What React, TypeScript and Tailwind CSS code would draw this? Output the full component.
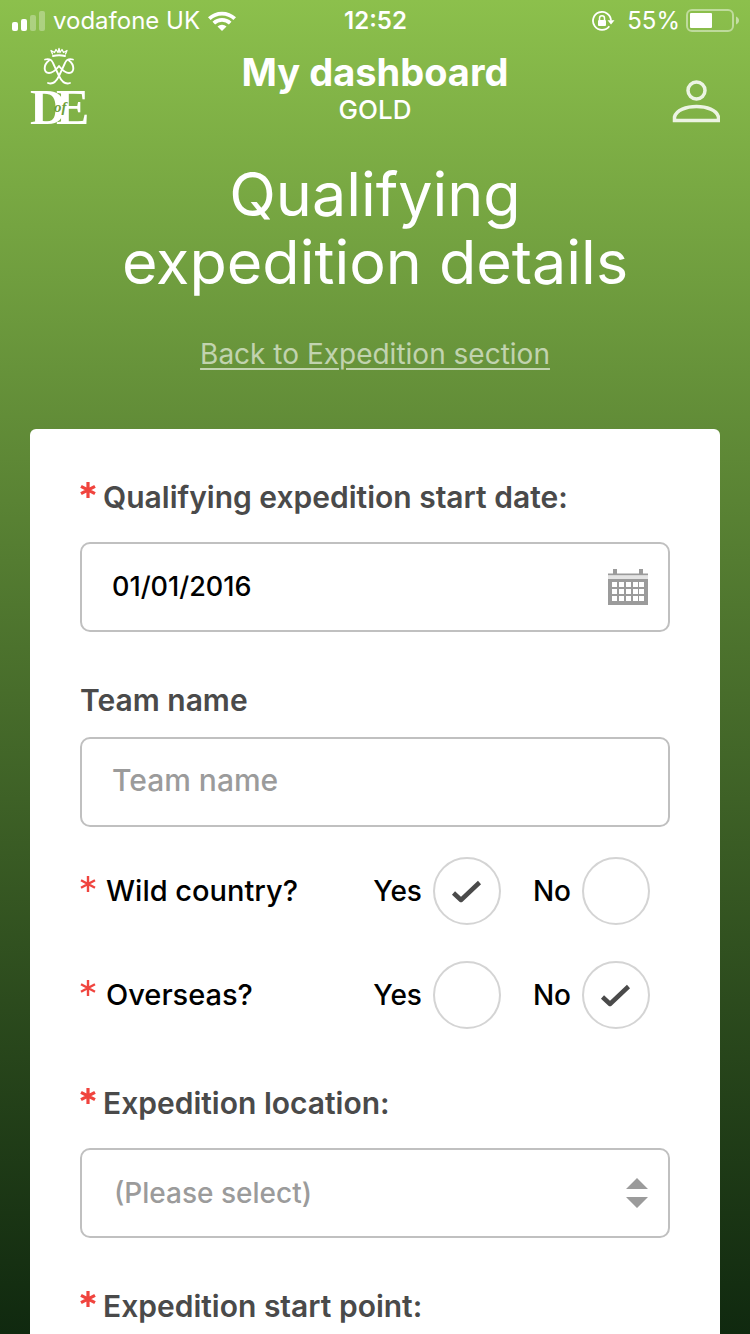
import React, { useState } from 'react';

const LOCATIONS = ['Brecon Beacons', 'Dartmoor', 'Lake District', 'Peak District', 'Snowdonia'];

const StatusBar: React.FC = () => (
  <div className="grid h-10 grid-cols-[1fr_auto_1fr] items-center pr-[11px] pl-3 text-2xl leading-10">
    <div className="flex items-center">
      <svg className="mr-2 h-5 w-[33px]" viewBox="0 0 33 20" fill="currentColor">
        <rect x="0" y="11" width="6" height="9" rx="2" />
        <rect x="9" y="8" width="6" height="12" rx="2" />
        <rect x="18" y="4" width="6" height="16" rx="2" opacity="0.3" />
        <rect x="27" y="0" width="6" height="20" rx="2" opacity="0.3" />
      </svg>
      <span className="pt-px whitespace-nowrap">vodafone UK</span>
      <svg className="ml-2 h-5 w-7" viewBox="0 0 28 20">
        <path d="M1.300 7.600a18.500 18.500 0 0 1 25.400 0M5.800 12.200a12 12 0 0 1 16.400 0" fill="none" stroke="currentColor" strokeWidth="3.800" />
        <path d="M14 20l-4.500-4.500a6.500 6.500 0 0 1 9 0Z" fill="currentColor" />
      </svg>
    </div>

    <span className="pt-px font-semibold">12:52</span>

    <div className="flex items-center justify-end">
      <svg className="mr-3 h-5 w-[23px]" viewBox="0 0 23 20">
        <path d="M17.300 15.200A9 9 0 1 1 19 9.500" fill="none" stroke="currentColor" strokeWidth="1.800" />
        <path d="M15.500 9.200h7l-3.500 4.300Z" fill="currentColor" />
        <rect x="6" y="9" width="8" height="6" rx="1" fill="currentColor" />
        <path d="M7.500 9V7.200a2.500 2.500 0 0 1 5 0V9" fill="none" stroke="currentColor" strokeWidth="1.500" />
      </svg>
      <span className="pt-px">55%</span>
      <svg className="ml-[6px] h-6 w-[53px]" viewBox="0 0 53 24">
        <rect x="1" y="1" width="46" height="21" rx="5" fill="none" stroke="currentColor" strokeWidth="2" opacity="0.45" />
        <rect x="4" y="4" width="22" height="15" rx="1" fill="currentColor" />
        <path d="M50 7.500c4 1.500 4 6.500 0 8Z" fill="currentColor" opacity="0.5" />
      </svg>
    </div>
  </div>
);

const Logo: React.FC = () => (
  <svg className="h-[78px] w-[60px] overflow-visible" viewBox="0 0 60 78" role="img" aria-label="DofE">
    <g fill="none" stroke="white" strokeLinecap="round" strokeLinejoin="round">
      {/* Crown */}
      <path d="M23 8q6-1.600 12 0" strokeWidth="2" />
      <path d="M22.500 6l-1.500-3.500 3.500 2 1.500-3 2 3 1-4 1 4 2-3 1.500 3 3.500-2-1.500 3.500" strokeWidth="1.300" />
      {/* Crossed cypher */}
      <path d="M15 11.500c4-1 6.500 0 8 3.500l6 13c2.500 5 6 9 11 7" strokeWidth="1.800" />
      <path d="M43 11.500c-4-1-6.500 0-8 3.500l-6 13c-2.500 5-6 9-11 7" strokeWidth="1.800" />
      <path d="M19 12.500c-5.500 4-6 12.500 0 12.500 5 0 7-3.500 10-7 3 3.500 5 7 10 7 6 0 5.500-8.500 0-12.500" strokeWidth="1.900" />
    </g>
    <g fontFamily="'Liberation Serif', serif" fontWeight="700">
      <text x="0" y="76" fontSize="50" fill="white">D</text>
      <text x="26" y="76" fontSize="50" fill="white">E</text>
      <text x="24" y="64" fontSize="15" fontStyle="italic" fill="#6fa03a">of</text>
    </g>
  </svg>
);

const Required: React.FC<{ bold?: boolean }> = ({ bold }) => (
  <svg className="mt-[5px] h-4 w-4 shrink-0 text-[#f0443e]" viewBox="0 0 16 16" role="img" aria-label="required">
    <path d="M8 0v16M1 4.300l14 7.400M15 4.300l-14 7.400" stroke="currentColor" strokeWidth={bold ? 3.2 : 2.4} />
  </svg>
);

interface FieldLabelProps {
  htmlFor: string;
  required?: boolean;
  children: React.ReactNode;
}

const FieldLabel: React.FC<FieldLabelProps> = ({ htmlFor, required, children }) => (
  <label htmlFor={htmlFor} className="flex gap-[7px] text-[30px] leading-10 font-semibold text-[#4a4a4a]">
    {required && <Required bold />}
    {children}
  </label>
);

interface YesNoRowProps {
  name: string;
  label: string;
  value: string;
  onChange: (value: string) => void;
}

const YesNoRow: React.FC<YesNoRowProps> = ({ name, label, value, onChange }) => (
  <div role="radiogroup" aria-labelledby={`${name}-label`} className="flex items-center pr-5 font-medium text-black">
    <span id={`${name}-label`} className="flex flex-1 gap-[10px] text-[29px] leading-10">
      <Required />
      {label}
    </span>
    <div className="flex gap-8 text-[28px] leading-10">
      {['Yes', 'No'].map(option => (
        <label key={option} className="flex items-center gap-[11px]">
          {option}
          <span className="grid place-items-center">
            <input
              type="radio"
              name={name}
              value={option}
              checked={value === option}
              onChange={() => onChange(option)}
              className="col-start-1 row-start-1 size-[68px] appearance-none rounded-full border-2 border-[#d4d4d4] bg-white"
            />
            {value === option && (
              <svg className="pointer-events-none col-start-1 row-start-1 h-6 w-8" viewBox="0 0 32 24">
                <path d="M2.500 14l7.500 7L28.500 3.500" fill="none" stroke="#4a4a4a" strokeWidth="4.500" strokeLinejoin="round" />
              </svg>
            )}
          </span>
        </label>
      ))}
    </div>
  </div>
);

const App: React.FC = () => {
  const [startDate, setStartDate] = useState('01/01/2016');
  const [teamName, setTeamName] = useState('');
  const [wildCountry, setWildCountry] = useState('Yes');
  const [overseas, setOverseas] = useState('No');
  const [location, setLocation] = useState('');

  return (
    <div className="flex min-h-screen flex-col bg-linear-to-b from-[#8cc04c] to-[#10290f] font-['Inter',sans-serif] text-white">
      <StatusBar />

      {/* Header */}
      <header className="grid grid-cols-[60px_1fr_60px] px-[30px] pt-2">
        <Logo />
        <div className="pt-1 text-center">
          <p className="text-[38px] leading-10 font-bold">My dashboard</p>
          <p className="text-[26px] leading-9 font-medium">GOLD</p>
        </div>
        <button type="button" aria-label="Profile" className="flex items-end justify-end pb-1">
          <svg className="h-11 w-12" viewBox="0 0 48 44" fill="none" stroke="white" strokeOpacity="0.850" strokeWidth="3.500">
            <circle cx="24.500" cy="10.500" r="8.500" />
            <path d="M2.500 40.500V37C6 23 43 23 46.500 37V40.500Z" />
          </svg>
        </button>
      </header>

      <div className="mt-8 px-[30px] text-center">
        <h1 className="mx-auto max-w-[600px] text-[61px] leading-[68px]">Qualifying expedition details</h1>
        <a href="#expedition" className="mt-[38px] inline-block text-[28px] leading-10 text-white/60 underline decoration-2 underline-offset-4">
          Back to Expedition section
        </a>
      </div>

      {/* Form card */}
      <form className="mx-[30px] mt-[55px] flex-1 rounded-t-md bg-white px-[50px] pt-12">
        <FieldLabel htmlFor="start-date" required>Qualifying expedition start date:</FieldLabel>
        <div className="mt-[25px] flex h-[90px] items-center rounded-[10px] border-2 border-[#c0c0c0] pr-5 pl-[30px]">
          <input
            id="start-date"
            type="text"
            value={startDate}
            onChange={e => setStartDate(e.target.value)}
            className="min-w-0 flex-1 text-[27px] font-medium text-black outline-none"
          />
          <button type="button" aria-label="Open calendar">
            <svg className="h-9 w-10" viewBox="0 0 40 36">
              <path d="M5 0h4v5H5ZM31 0h4v5h-4ZM0 4.500h40v2H0ZM0 10h40v26H0Z" fill="#9b9b9b" />
              <path d="M0 6.500h40V10H0Z" fill="#e4e4e4" />
              {[13, 20, 27].map(y =>
                [4, 11, 18, 25, 31].map(x => <rect key={`${x}-${y}`} x={x} y={y} width="5" height="5" fill="white" />)
              )}
            </svg>
          </button>
        </div>

        <div className="mt-12">
          <FieldLabel htmlFor="team-name">Team name</FieldLabel>
        </div>
        <input
          id="team-name"
          type="text"
          placeholder="Team name"
          value={teamName}
          onChange={e => setTeamName(e.target.value)}
          className="mt-[17px] block h-[90px] w-full rounded-[10px] border-2 border-[#c0c0c0] px-[30px] pb-1 text-[30px] font-medium text-black outline-none placeholder:text-[#9b9b9b]"
        />

        <div className="mt-[30px] space-y-9">
          <YesNoRow name="wild-country" label="Wild country?" value={wildCountry} onChange={setWildCountry} />
          <YesNoRow name="overseas" label="Overseas?" value={overseas} onChange={setOverseas} />
        </div>

        <div className="mt-[54px]">
          <FieldLabel htmlFor="location" required>Expedition location:</FieldLabel>
        </div>
        <div className="relative mt-[25px]">
          <select
            id="location"
            value={location}
            onChange={e => setLocation(e.target.value)}
            className="block h-[90px] w-full appearance-none rounded-[10px] border-2 border-[#c0c0c0] bg-white px-8 text-[28px] font-medium text-[#9b9b9b] outline-none"
          >
            <option value="">(Please select)</option>
            {LOCATIONS.map(name => (
              <option key={name} value={name}>{name}</option>
            ))}
          </select>
          <svg className="pointer-events-none absolute top-[30px] right-[22px] h-[30px] w-[22px]" viewBox="0 0 22 30" fill="#9b9b9b">
            <path d="M11 0L22 11H0ZM0 19h22L11 30Z" />
          </svg>
        </div>

        <div className="mt-12">
          <FieldLabel htmlFor="start-point" required>Expedition start point:</FieldLabel>
        </div>
      </form>
    </div>
  );
};

export default App;
